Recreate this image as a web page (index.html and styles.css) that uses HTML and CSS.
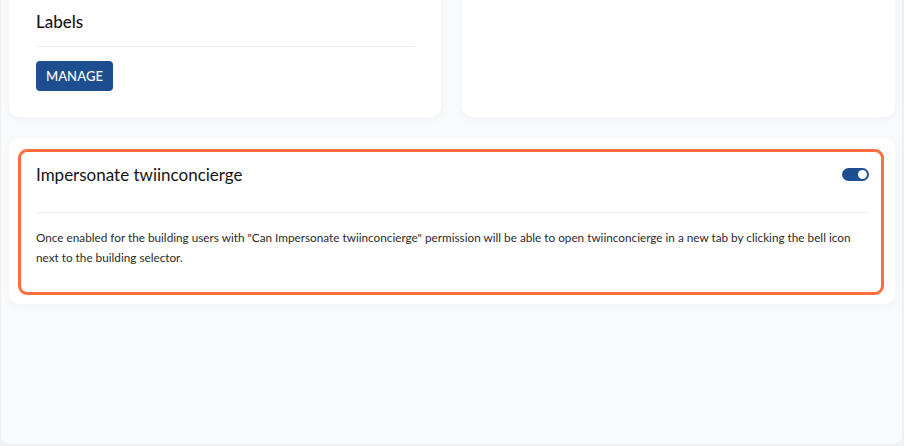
FILE: index.html
```html
<!DOCTYPE html>
<html lang="en">
<head>
<meta charset="utf-8">
<title>Settings</title>
<link rel="stylesheet" href="styles.css">
</head>
<body>
<div class="frame">
  <div class="content">
    <div class="row">
      <section class="card card-labels">
        <h2 class="card-title">Labels</h2>
        <hr class="divider">
        <button class="btn-primary" type="button">MANAGE</button>
      </section>
      <section class="card card-empty"></section>
    </div>
    <section class="card card-wide">
      <div class="highlight">
        <div class="setting-head">
          <h2 class="setting-title">Impersonate twiinconcierge</h2>
          <span class="toggle on" role="switch" aria-checked="true"><span class="knob"></span></span>
        </div>
        <hr class="divider">
        <p class="setting-desc">Once enabled for the building users with "Can Impersonate twiinconcierge" permission will be able to open twiinconcierge in a new tab by clicking the bell icon next to the building selector.</p>
      </div>
    </section>
  </div>
</div>
</body>
</html>
```

FILE: styles.css
```css
* { box-sizing: border-box; }

html, body {
  margin: 0;
  padding: 0;
  background: #f1f2f5;
  font-family: Lato, "Open Sans", Arial, sans-serif;
  color: #1c1c1c;
}

.frame {
  width: 903px;
  height: 445px;
  background: #f9fafc;
  border: 1px solid #eceef2;
  border-top: none;
  border-radius: 0 0 8px 8px;
  overflow: hidden;
}

.content {
  margin-top: -40px;
  padding: 0 7px 0 8px;
  display: flex;
  flex-direction: column;
  gap: 21px;
}

.row {
  display: grid;
  grid-template-columns: 432px 433px;
  gap: 21px;
}

.card {
  background: #ffffff;
  border-radius: 10px;
  box-shadow: 0 2px 8px rgba(30, 40, 70, 0.04);
}

.card-labels {
  height: 157px;
  padding: 51px 26px 0 27px;
}

.card-title {
  margin: 0;
  font-size: 17px;
  font-weight: 500;
  line-height: 22px;
  color: #151515;
}

.divider {
  border: none;
  height: 1px;
  background: #ebedf0;
  margin: 0;
}

.card-labels .divider {
  margin-top: 13px;
}

.btn-primary {
  margin-top: 14px;
  width: 77px;
  height: 30px;
  border: none;
  border-radius: 4px;
  background: #1d4f90;
  color: #ffffff;
  font-family: inherit;
  font-size: 13px;
  font-weight: 500;
  letter-spacing: 0.1px;
  padding: 0;
  cursor: pointer;
}

.card-wide {
  padding: 11px 11px 9px 9px;
}

.highlight {
  border: 3px solid #ff6e3c;
  border-radius: 9px;
  padding: 0 12px 24px 15px;
}

.setting-head {
  height: 60px;
  display: flex;
  justify-content: space-between;
  align-items: flex-start;
  padding-top: 9px;
}

.setting-title {
  margin: 0;
  font-size: 17px;
  font-weight: 400;
  line-height: 28px;
  color: #151515;
}

.toggle {
  margin-top: 7px;
  width: 27px;
  height: 13px;
  border-radius: 7px;
  background: #1d4f90;
  position: relative;
  display: block;
}

.knob {
  position: absolute;
  right: 2px;
  top: 2px;
  width: 9px;
  height: 9px;
  border-radius: 50%;
  background: #ffffff;
}

.setting-desc {
  margin: 15px 0 0;
  font-size: 11.75px;
  line-height: 20px;
  color: #2b2b2b;
}
```
